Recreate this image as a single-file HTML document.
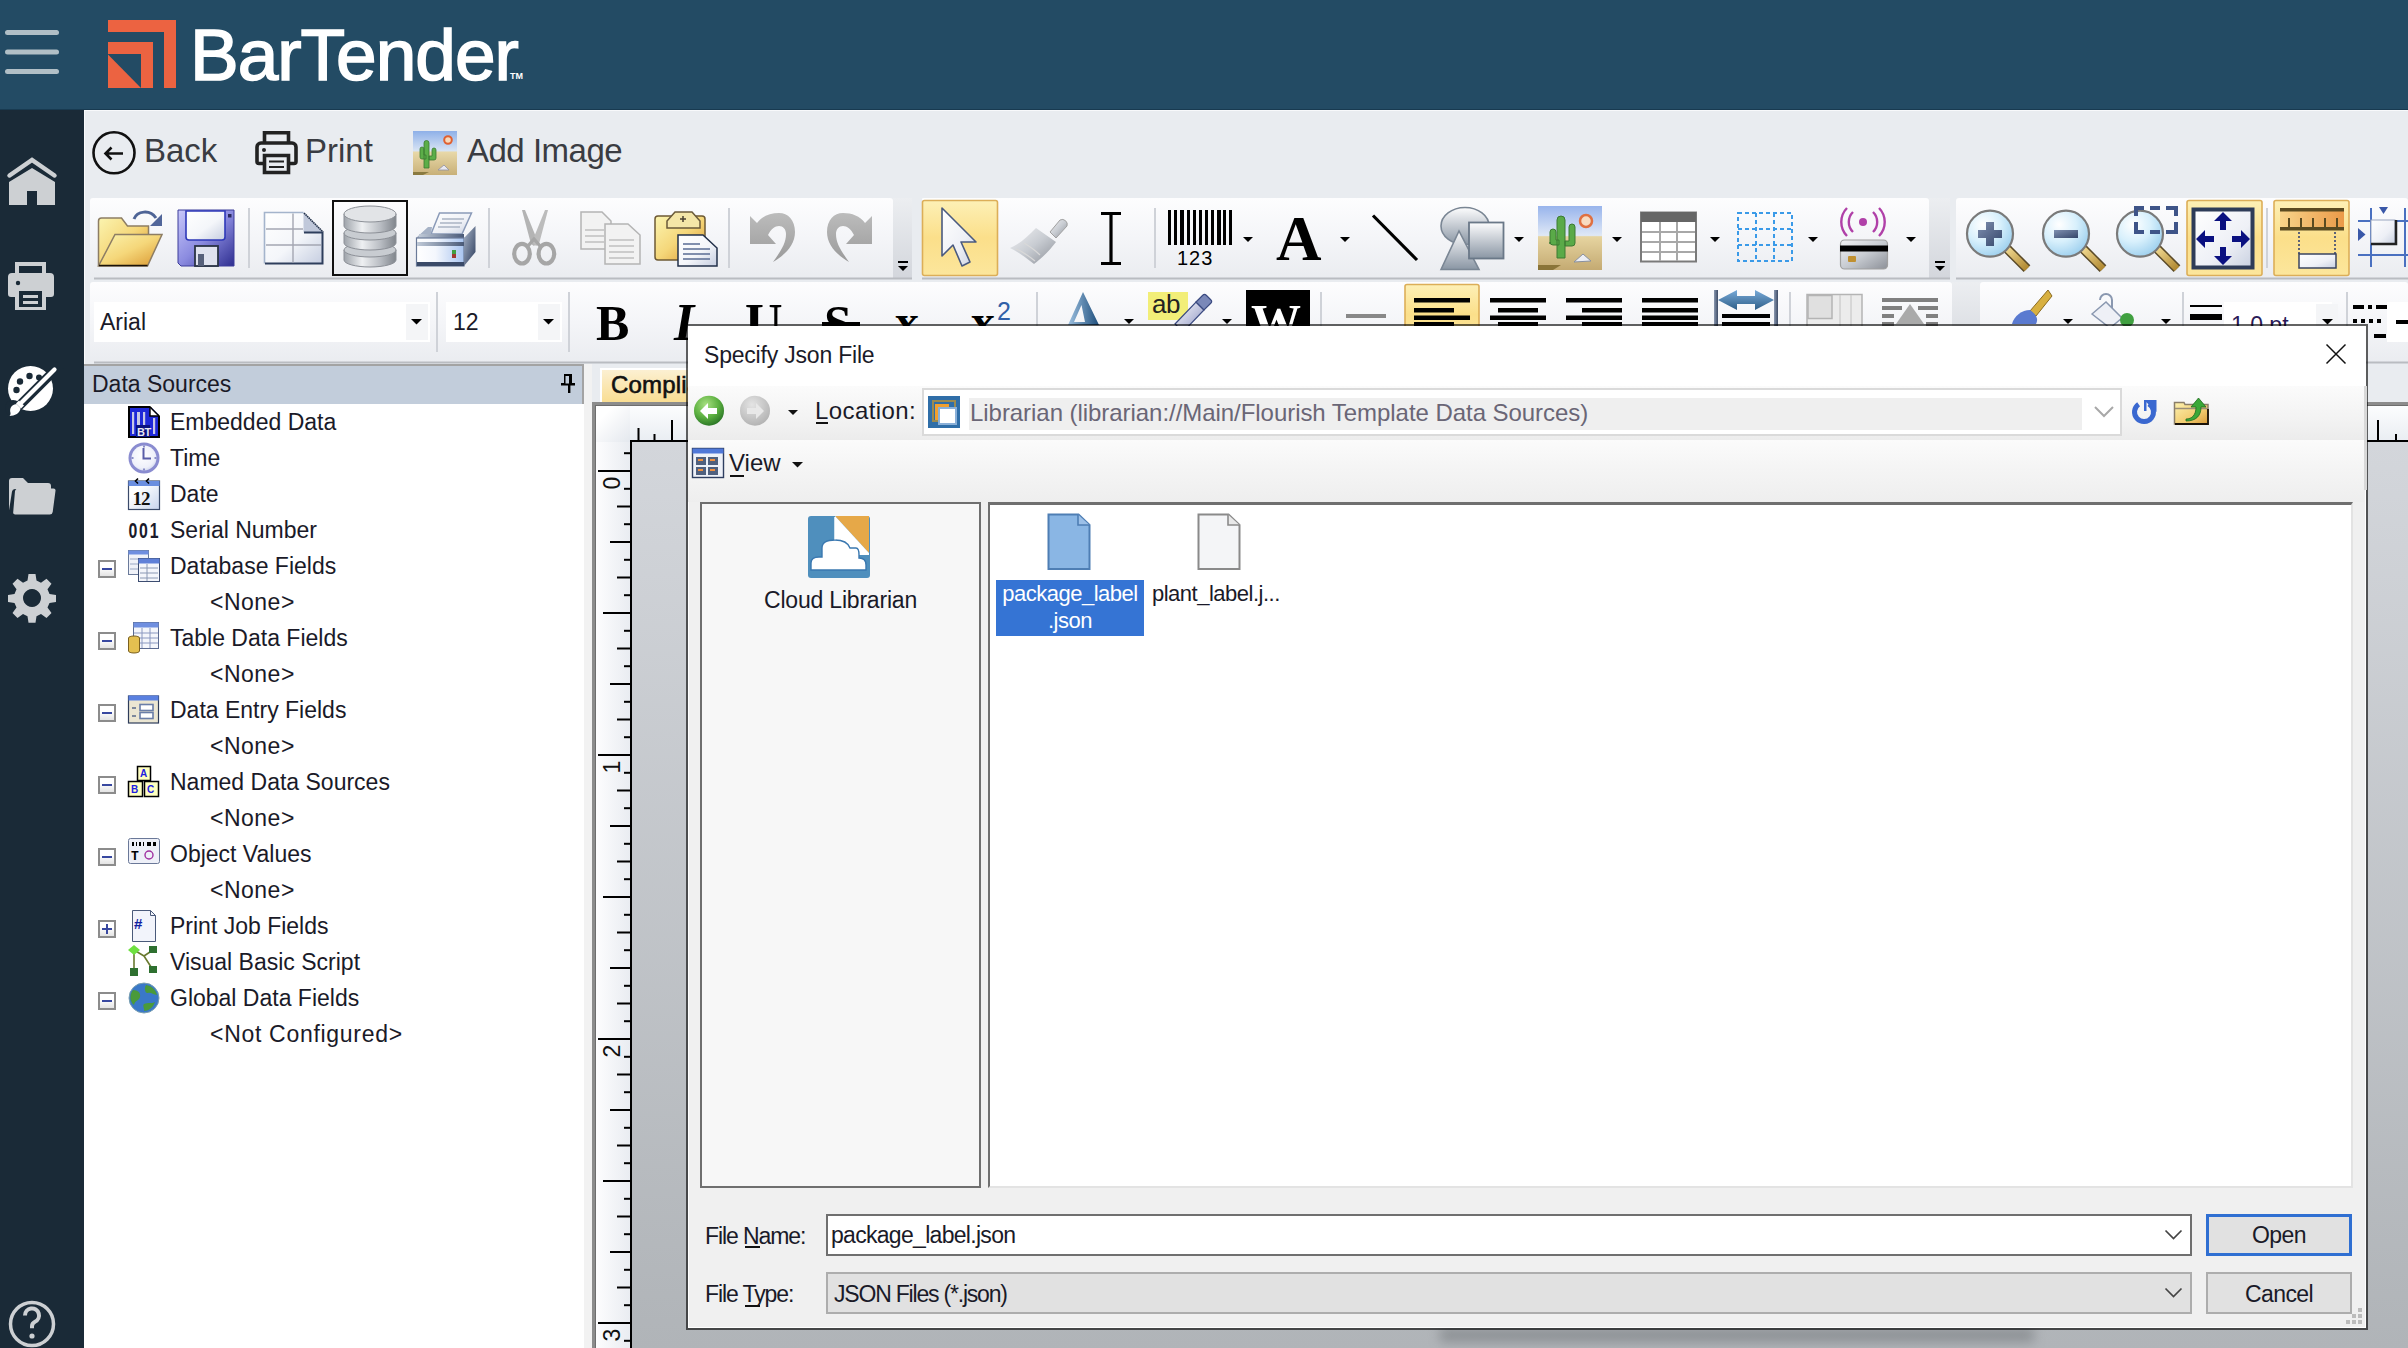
<!DOCTYPE html>
<html><head><meta charset="utf-8">
<style>
*{margin:0;padding:0;box-sizing:border-box}
html,body{width:2408px;height:1348px;overflow:hidden;background:#e9ecf0;font-family:"Liberation Sans",sans-serif}
.a{position:absolute}
svg{position:absolute;overflow:visible}
#hdr{left:0;top:0;width:2408px;height:110px;background:#234b64;border-bottom:1px solid #183a50}
#side{left:0;top:110px;width:84px;height:1238px;background:#1a2a37}
#main{left:84px;top:110px;width:2324px;height:1238px;background:#e9ecf0;border-top:1px solid #f8f9fb;border-left:1px solid #f8f9fb}
.tb{background:linear-gradient(#fdfdfe,#f3f4f7 50%,#eceef2);border-radius:3px}
.sep{width:2px;background:#d3d6db;border-right:1px solid #fff}
.t{white-space:nowrap;color:#1e1e1e}
</style></head><body>
<div id="hdr" class="a"></div>
<!-- header content -->
<svg style="left:0;top:0" width="600" height="110">
 <g stroke="#b1bfc6" stroke-width="5" stroke-linecap="round"><line x1="7.5" y1="32.5" x2="56.5" y2="32.5"/><line x1="7.5" y1="52" x2="56.5" y2="52"/><line x1="7.5" y1="71.5" x2="56.5" y2="71.5"/></g>
 <g fill="#ec6341"><path d="M108 20H176V88H164V32H108Z"/><path d="M108 42H153V88H141V54H108Z"/><path d="M108 54.5L141 88H108Z"/></g>
</svg>
<div class="a t" id="logo" style="left:190px;top:13px;font-size:73px;color:#fff;letter-spacing:-1.0px;line-height:84px;-webkit-text-stroke:1.6px #fff">BarTender</div>
<div class="a t" style="left:510px;top:71px;font-size:9px;color:#fff;font-weight:bold;line-height:10px">TM</div>
<div id="side" class="a"></div>
<div id="main" class="a"></div>
<!-- TOOLBAR -->
<svg style="left:0;top:0" width="2408" height="370">
<defs>
 <linearGradient id="gexp" x1="0" y1="0" x2="0" y2="1"><stop offset="0.4" stop-color="#fff"/><stop offset="1" stop-color="#e0e0e0"/></linearGradient>
 <linearGradient id="gp" x1="0" y1="0" x2="0" y2="1"><stop offset="0" stop-color="#fdfdfe"/><stop offset="0.5" stop-color="#f4f5f8"/><stop offset="1" stop-color="#eaecf0"/></linearGradient>
 <linearGradient id="gov" x1="0" y1="0" x2="0" y2="1"><stop offset="0" stop-color="#eceef1"/><stop offset="1" stop-color="#d3d6dc"/></linearGradient>
 <linearGradient id="gsel" x1="0" y1="0" x2="0" y2="1"><stop offset="0" stop-color="#fdf1b8"/><stop offset="0.45" stop-color="#fbe08e"/><stop offset="1" stop-color="#fbe596"/></linearGradient>
 <linearGradient id="gfold" x1="0" y1="0" x2="1" y2="1"><stop offset="0" stop-color="#fbf4b0"/><stop offset="0.5" stop-color="#f5d77a"/><stop offset="1" stop-color="#d9962e"/></linearGradient>
 <linearGradient id="gsave" x1="0" y1="0" x2="1" y2="1"><stop offset="0" stop-color="#c8c8fa"/><stop offset="0.5" stop-color="#8b8be0"/><stop offset="1" stop-color="#2e2e90"/></linearGradient>
 <linearGradient id="gwh" x1="0" y1="0" x2="1" y2="1"><stop offset="0" stop-color="#fff"/><stop offset="0.55" stop-color="#f4f6fa"/><stop offset="1" stop-color="#c5cde0"/></linearGradient>
 <linearGradient id="gsil" x1="0" y1="0" x2="1" y2="0"><stop offset="0" stop-color="#9ea3aa"/><stop offset="0.35" stop-color="#eef0f2"/><stop offset="0.7" stop-color="#b9bdc3"/><stop offset="1" stop-color="#80858c"/></linearGradient>
 <linearGradient id="ggray" x1="0" y1="0" x2="1" y2="1"><stop offset="0" stop-color="#e8e8e8"/><stop offset="1" stop-color="#9a9a9a"/></linearGradient>
 <linearGradient id="gblue" x1="0" y1="0" x2="1" y2="1"><stop offset="0" stop-color="#e0f2ff"/><stop offset="1" stop-color="#9cc8ea"/></linearGradient>
 <linearGradient id="gorg" x1="0" y1="0" x2="1" y2="0"><stop offset="0" stop-color="#f5c878"/><stop offset="1" stop-color="#ec9a40"/></linearGradient>
</defs>
<!-- row1 panels -->
<rect x="90" y="198" width="803" height="81" rx="3" fill="url(#gp)"/>
<rect x="893" y="198" width="20" height="81" fill="url(#gov)"/>
<rect x="921" y="198" width="1008" height="81" rx="3" fill="url(#gp)"/>
<rect x="1929" y="198" width="21" height="81" fill="url(#gov)"/>
<rect x="1956" y="198" width="452" height="81" rx="3" fill="url(#gp)"/>
<rect x="94" y="277.5" width="2314" height="2" fill="#b9bcc1"/>
<rect x="912" y="198" width="10" height="82" fill="#e9ecf0"/>
<rect x="1950" y="198" width="6" height="82" fill="#e9ecf0"/>
<g fill="#000"><rect x="898" y="261" width="10" height="2"/><path d="M898 266h10l-5 5z"/><rect x="1935" y="261" width="10" height="2"/><path d="M1935 266h10l-5 5z"/></g>
<!-- row2 panels -->
<rect x="90" y="282" width="1862" height="81" rx="3" fill="url(#gp)"/>
<rect x="1952" y="282" width="28" height="81" fill="url(#gov)"/>
<rect x="1980" y="282" width="428" height="81" rx="3" fill="url(#gp)"/>
<rect x="94" y="361.5" width="2314" height="2" fill="#b9bcc1"/>
<!-- separators -->
<g fill="#cfd2d8">
 <rect x="248" y="208" width="2" height="60"/><rect x="488" y="208" width="2" height="60"/><rect x="728" y="208" width="2" height="60"/>
 <rect x="1154" y="208" width="2" height="60"/><rect x="2266" y="208" width="2" height="60"/>
 <rect x="436" y="292" width="2" height="60"/><rect x="568" y="292" width="2" height="60"/><rect x="1036" y="292" width="2" height="60"/>
 <rect x="1320" y="292" width="2" height="60"/><rect x="1789" y="292" width="2" height="60"/><rect x="2182" y="292" width="2" height="60"/><rect x="2346" y="292" width="2" height="60"/>
</g>
<!-- folder open -->
<path d="M98.5 266V221a3 3 0 0 1 3-3h20l6 8h21v8" fill="url(#gfold)" stroke="#8d7d64" stroke-width="1.5"/>
<path d="M115 234.5H162L147.5 266H98.5Z" fill="url(#gfold)" stroke="#8d7d64" stroke-width="1.5"/>
<path d="M99 265.5H147.5" stroke="#1a1208" stroke-width="1.5"/>
<path d="M134 219c3-8 16-10 22-1" fill="none" stroke="#4e6496" stroke-width="3"/>
<path d="M150 226h12v-12z" fill="#52669a"/>
<!-- save -->
<path d="M178 210H234V266H181L178 263Z" fill="url(#gsave)" stroke="#3c3c9a" stroke-width="1"/>
<path d="M186 211H225V237a3 3 0 0 1-3 3H189a3 3 0 0 1-3-3Z" fill="url(#gwh)" stroke="#2e38b8" stroke-width="1.6"/>
<rect x="228" y="214" width="3.5" height="3.5" fill="#2a2a60"/>
<rect x="195" y="246" width="23" height="20" fill="#dfe2ee" stroke="#2a3344" stroke-width="1.8"/>
<rect x="198" y="254" width="6" height="12" fill="#56607a"/>
<!-- new label -->
<path d="M264.5 212.5H303.5L323 232V263.5H264.5Z" fill="url(#gwh)"/>
<path d="M264.5 263.5V212.5H303.5" fill="none" stroke="#a4b4cc" stroke-width="1.6"/>
<path d="M303.5 212.5V232.5H323Z" fill="#c0c8da"/>
<path d="M304 213L323 232" stroke="#22304a" stroke-width="1.6" stroke-dasharray="1.6 0.6"/>
<path d="M304 232.5H322.5V263.5H265" fill="none" stroke="#2e3e5c" stroke-width="2"/>
<path d="M266 229H303M266 245H321M293 213.5V262.5" stroke="#a4a6b2" stroke-width="1.4"/>
<!-- database selected -->
<rect x="333" y="201" width="74" height="74" fill="none" stroke="#111" stroke-width="2"/>
<g stroke="#8c9097" stroke-width="1">
 <path d="M344 250v10a26 7 0 0 0 52 0v-10z" fill="url(#gsil)"/><ellipse cx="370" cy="250" rx="26" ry="7" fill="#c8ccd1"/>
 <path d="M344 233v10a26 7 0 0 0 52 0v-10z" fill="url(#gsil)"/><ellipse cx="370" cy="233" rx="26" ry="7" fill="#c8ccd1"/>
 <path d="M344 214v12a26 7 0 0 0 52 0v-12z" fill="url(#gsil)"/><ellipse cx="370" cy="214" rx="26" ry="8" fill="#e2e4e7"/>
</g>
<!-- printer -->
<defs><linearGradient id="gprf" x1="0" y1="0" x2="1" y2="0"><stop offset="0" stop-color="#fff"/><stop offset="0.4" stop-color="#f4f7fd"/><stop offset="1" stop-color="#a8c4f0"/></linearGradient>
<linearGradient id="gprs" x1="0" y1="0" x2="1" y2="1"><stop offset="0" stop-color="#a8b4c8"/><stop offset="1" stop-color="#2c3c5c"/></linearGradient>
<linearGradient id="gprb" x1="0" y1="0" x2="1" y2="0"><stop offset="0" stop-color="#c0cad8"/><stop offset="1" stop-color="#4a5a78"/></linearGradient></defs>
<path d="M439.5 213H471.5L462 234H431Z" fill="url(#g2w)" stroke="#8a9ab8" stroke-width="1.5"/>
<path d="M442 219H464M440 223H462M438 227H460" stroke="#aab4c4" stroke-width="1.3"/>
<path d="M416 238L428 227H432L431 234H464V238Z" fill="#a6b2c6"/>
<path d="M419 234H464V238H419Z" fill="url(#gprb)"/>
<rect x="416.5" y="238" width="47.5" height="28" fill="url(#gprf)" stroke="#6a7a98" stroke-width="1.2"/>
<rect x="417" y="242" width="47" height="4" fill="url(#gprb)"/>
<rect x="417" y="262" width="47" height="4" fill="#3a4a68"/>
<path d="M464 238L475.5 226V252L464 266Z" fill="url(#gprs)"/>
<rect x="452" y="250" width="4" height="4" fill="#40a040"/><rect x="452" y="254" width="4" height="4" fill="#a03a30"/>
<!-- scissors gray -->
<g fill="none" stroke="#a6a6a6"><ellipse cx="522" cy="253.7" rx="7.8" ry="9.8" stroke-width="4.2"/><ellipse cx="546.4" cy="253.7" rx="7.8" ry="9.8" stroke-width="4.2"/></g>
<path d="M522 210l3 0 13 32-4 4-3-2z" fill="#b4b4b4"/><path d="M548 210l-3 0-13 32 4 4 3-2z" fill="#bcbcbc"/>
<path d="M528 246l6-7 6 7" stroke="#a6a6a6" stroke-width="3.4" fill="none"/>
<!-- copy gray -->
<g stroke="#b4b4b4" stroke-width="1.5" fill="#f2f2f2"><path d="M581 212H602L611 221V249H581Z"/><path d="M605 224H628L640 235V264H605Z"/></g>
<g stroke="#c0c0c0" stroke-width="1.5"><path d="M585 230H604M585 236H604M585 242H604M609 240H634M609 246H634M609 252H634M609 258H634"/></g>
<!-- paste -->
<path d="M655 219a3 3 0 0 1 3-3H702a3 3 0 0 1 3 3V260H658a3 3 0 0 1-3-3Z" fill="url(#gfold)" stroke="#6e5a34" stroke-width="1.5"/>
<path d="M667 228V221L675 212H692L700 221V228Z" fill="#f4e6a8" stroke="#6a5a3a" stroke-width="1.5"/>
<path d="M680 219h6M683 216v6" stroke="#4a4030" stroke-width="1.5"/>
<path d="M678 235H703L717 248V266H678Z" fill="url(#gwh)" stroke="#22304a" stroke-width="1.5"/>
<path d="M683 244H700M683 249H710M683 254H710M683 259H710" stroke="#5a6c94" stroke-width="1.5"/>
<!-- undo / redo gray -->
<defs><linearGradient id="gundo" x1="0" y1="0" x2="0" y2="1"><stop offset="0" stop-color="#bcbcbc"/><stop offset="1" stop-color="#9a9a9a"/></linearGradient></defs>
<path d="M750 216 L757 223 C762 216 770 213 779 213 C788 213 795 220 795 232 C795 245 785 255 773 262 C780 252 786 244 786 234 C786 229 783 226 779 226 C775 226 771 229 768 235 L776 244 H750 Z" fill="url(#gundo)"/>
<path d="M 872 216 L 865 223 C 860 216 852 213 843 213 C 834 213 827 220 827 232 C 827 245 837 255 849 262 C 842 252 836 244 836 234 C 836 229 839 226 843 226 C 847 226 851 229 854 235 L 846 244 H 872 Z" fill="url(#gundo)"/>
</svg>
<!-- LEFT PANEL -->
<div class="a" style="left:84px;top:364px;width:500px;height:40px;background:#c2cddb;border-top:2px solid #a3a3a3;border-right:2px solid #a3a3a3"></div>
<div class="a t" style="left:92px;top:370px;font-size:23px;line-height:28px;color:#1a1a28">Data Sources</div>
<svg style="left:560px;top:374px" width="16" height="20"><path d="M1 9h14v2.5H1z M4 0h8v10H4z M8 11h2.4v8H8z" fill="#000"/><rect x="5.5" y="2" width="3.5" height="7.5" fill="#c2cddb"/></svg>
<div class="a" style="left:84px;top:404px;width:500px;height:944px;background:#fff"></div>
<div class="a" style="left:584px;top:364px;width:8px;height:984px;background:#f2f2f2"></div>
<div class="a t" style="left:170px;top:409px;font-size:23px;line-height:26px;color:#1a1a28">Embedded Data</div>
<div class="a t" style="left:170px;top:445px;font-size:23px;line-height:26px;color:#1a1a28">Time</div>
<div class="a t" style="left:170px;top:481px;font-size:23px;line-height:26px;color:#1a1a28">Date</div>
<div class="a t" style="left:170px;top:517px;font-size:23px;line-height:26px;color:#1a1a28">Serial Number</div>
<div class="a t" style="left:170px;top:553px;font-size:23px;line-height:26px;color:#1a1a28">Database Fields</div>
<svg style="left:98px;top:560px" width="19" height="19"><rect x="1" y="1" width="16" height="16" fill="url(#gexp)" stroke="#8c8c8c" stroke-width="2"/><rect x="4" y="8" width="10" height="2" fill="#3848a0"/></svg>
<div class="a t" style="left:210px;top:589px;font-size:23px;line-height:26px;color:#1a1a28;letter-spacing:0.5px">&lt;None&gt;</div>
<div class="a t" style="left:170px;top:625px;font-size:23px;line-height:26px;color:#1a1a28">Table Data Fields</div>
<svg style="left:98px;top:632px" width="19" height="19"><rect x="1" y="1" width="16" height="16" fill="url(#gexp)" stroke="#8c8c8c" stroke-width="2"/><rect x="4" y="8" width="10" height="2" fill="#3848a0"/></svg>
<div class="a t" style="left:210px;top:661px;font-size:23px;line-height:26px;color:#1a1a28;letter-spacing:0.5px">&lt;None&gt;</div>
<div class="a t" style="left:170px;top:697px;font-size:23px;line-height:26px;color:#1a1a28">Data Entry Fields</div>
<svg style="left:98px;top:704px" width="19" height="19"><rect x="1" y="1" width="16" height="16" fill="url(#gexp)" stroke="#8c8c8c" stroke-width="2"/><rect x="4" y="8" width="10" height="2" fill="#3848a0"/></svg>
<div class="a t" style="left:210px;top:733px;font-size:23px;line-height:26px;color:#1a1a28;letter-spacing:0.5px">&lt;None&gt;</div>
<div class="a t" style="left:170px;top:769px;font-size:23px;line-height:26px;color:#1a1a28">Named Data Sources</div>
<svg style="left:98px;top:776px" width="19" height="19"><rect x="1" y="1" width="16" height="16" fill="url(#gexp)" stroke="#8c8c8c" stroke-width="2"/><rect x="4" y="8" width="10" height="2" fill="#3848a0"/></svg>
<div class="a t" style="left:210px;top:805px;font-size:23px;line-height:26px;color:#1a1a28;letter-spacing:0.5px">&lt;None&gt;</div>
<div class="a t" style="left:170px;top:841px;font-size:23px;line-height:26px;color:#1a1a28">Object Values</div>
<svg style="left:98px;top:848px" width="19" height="19"><rect x="1" y="1" width="16" height="16" fill="url(#gexp)" stroke="#8c8c8c" stroke-width="2"/><rect x="4" y="8" width="10" height="2" fill="#3848a0"/></svg>
<div class="a t" style="left:210px;top:877px;font-size:23px;line-height:26px;color:#1a1a28;letter-spacing:0.5px">&lt;None&gt;</div>
<div class="a t" style="left:170px;top:913px;font-size:23px;line-height:26px;color:#1a1a28">Print Job Fields</div>
<svg style="left:98px;top:920px" width="19" height="19"><rect x="1" y="1" width="16" height="16" fill="url(#gexp)" stroke="#8c8c8c" stroke-width="2"/><rect x="4" y="8" width="10" height="2" fill="#3848a0"/><rect x="8" y="4" width="2" height="10" fill="#3848a0"/></svg>
<div class="a t" style="left:170px;top:949px;font-size:23px;line-height:26px;color:#1a1a28">Visual Basic Script</div>
<div class="a t" style="left:170px;top:985px;font-size:23px;line-height:26px;color:#1a1a28">Global Data Fields</div>
<svg style="left:98px;top:992px" width="19" height="19"><rect x="1" y="1" width="16" height="16" fill="url(#gexp)" stroke="#8c8c8c" stroke-width="2"/><rect x="4" y="8" width="10" height="2" fill="#3848a0"/></svg>
<div class="a t" style="left:210px;top:1021px;font-size:23px;line-height:26px;color:#1a1a28;letter-spacing:0.7px">&lt;Not Configured&gt;</div>
<svg style="left:128px;top:406px" width="32" height="32"><rect x="1" y="1" width="30" height="30" fill="#1e28d8" stroke="#000" stroke-width="2"/><path d="M22 0H32V10Z" fill="#fff"/><path d="M22 1V10H31" fill="#fff" stroke="#000" stroke-width="1.4"/><path d="M22 1L31 10" stroke="#000" stroke-width="1.4"/><g fill="#c8c8e6"><rect x="4" y="6" width="2.2" height="22"/><rect x="9" y="6" width="3" height="14"/><rect x="15" y="6" width="2.2" height="14"/><rect x="25" y="12" width="2.2" height="16"/></g><rect x="8" y="19" width="14" height="12" fill="#0a1080"/><text x="9" y="30" font-family="Liberation Sans" font-weight="bold" font-size="11" fill="#e8e8f4" letter-spacing="-0.5">BT</text></svg>
<svg style="left:128px;top:442px" width="32" height="32"><defs><radialGradient id="gclk" cx="0.45" cy="0.4" r="0.7"><stop offset="0" stop-color="#ffffff"/><stop offset="0.7" stop-color="#eef0fa"/><stop offset="1" stop-color="#c4cce8"/></radialGradient></defs><circle cx="16" cy="16" r="15.5" fill="#8a8cd0"/><circle cx="16" cy="16" r="12.5" fill="url(#gclk)"/><path d="M15.5 6V16.5H23" fill="none" stroke="#5a5ea8" stroke-width="2"/><g fill="#8a8ec8"><rect x="15" y="3.5" width="2" height="2"/><rect x="15" y="26.5" width="2" height="2"/><rect x="3.5" y="15" width="2" height="2"/><rect x="26.5" y="15" width="2" height="2"/></g></svg>
<svg style="left:128px;top:478px" width="32" height="32"><defs><linearGradient id="gdat" x1="0" y1="0" x2="1" y2="1"><stop offset="0.3" stop-color="#fff"/><stop offset="1" stop-color="#c8d4ee"/></linearGradient></defs><rect x="0.5" y="3" width="31" height="28.5" fill="url(#gdat)" stroke="#3a4a6a" stroke-width="1.2"/><rect x="0.5" y="3" width="31" height="5" fill="#6a8ee0"/><path d="M10 0.5l-2.5 2.5 2.5 2.5M21 0.5l-2.5 2.5 2.5 2.5" stroke="#000" fill="none" stroke-width="1.6"/><text x="4.5" y="27" font-family="Liberation Serif" font-weight="bold" font-size="19" fill="#111" letter-spacing="-1">12</text></svg>
<svg style="left:128px;top:514px" width="32" height="32"><text transform="translate(0.5,24) scale(0.72,1)" x="0" y="0" font-family="Liberation Sans" font-weight="bold" font-size="22" fill="#1a1a2a" letter-spacing="2.5">001</text></svg>
<svg style="left:128px;top:550px" width="32" height="32"><rect x="0.5" y="0.5" width="20" height="24" fill="#f0f2f8" stroke="#6a7a9a"/><rect x="0.5" y="0.5" width="20" height="4" fill="#6f8fe0"/><path d="M2 9h17M2 14h17M2 19h17" stroke="#9aa8c4"/><rect x="10.5" y="8.5" width="21" height="23" fill="#f4f6fb" stroke="#3c4c70"/><rect x="10.5" y="8.5" width="21" height="5" fill="#5f80d8"/><path d="M12 18h18M12 23h18M12 28h18M19 14v17" stroke="#8a98b4"/></svg>
<svg style="left:128px;top:622px" width="32" height="32"><rect x="5.5" y="0.5" width="25" height="26" fill="#f4f6fb" stroke="#5a6a90"/><rect x="5.5" y="0.5" width="25" height="5" fill="#6f8fe0"/><path d="M6 11h24M6 16h24M6 21h24M14 6v20M22 6v20" stroke="#8a98c0"/><path d="M0.5 16a5.5 2 0 0 1 11 0v13a5.5 2 0 0 1-11 0z" fill="#e4c050" stroke="#7a6020"/></svg>
<svg style="left:128px;top:694px" width="32" height="32"><rect x="0.5" y="2" width="30" height="27" fill="#ebe6d2" stroke="#2e3c5a" stroke-width="1.2"/><rect x="0.5" y="1.5" width="30" height="5" fill="#5a80e0"/><path d="M4 14h4M4 22h4" stroke="#5a6a8a" stroke-width="1.6"/><rect x="12" y="10.5" width="13" height="6" fill="#fff" stroke="#6a7ea8" stroke-width="1.6"/><rect x="12" y="18.5" width="13" height="6" fill="#fff" stroke="#6a7ea8" stroke-width="1.6"/></svg>
<svg style="left:128px;top:766px" width="32" height="32"><rect x="9.5" y="0.5" width="13" height="14" fill="#ffffc0" stroke="#000" stroke-width="1.5"/><rect x="0.5" y="15.5" width="14" height="15" fill="#ffffc0" stroke="#000" stroke-width="1.5"/><rect x="16.5" y="15.5" width="14" height="15" fill="#ffffc0" stroke="#000" stroke-width="1.5"/><g font-family="Liberation Sans" font-weight="bold" font-size="10" fill="#2020e0"><text x="12" y="11">A</text><text x="3" y="27">B</text><text x="19" y="27">C</text></g></svg>
<svg style="left:128px;top:838px" width="32" height="32"><rect x="0.5" y="0.5" width="31" height="25" rx="2" fill="#eef0f8" stroke="#6a7898"/><g fill="#000"><rect x="4" y="4" width="2" height="4"/><rect x="8" y="4" width="1" height="4"/><rect x="11" y="4" width="2" height="4"/><rect x="15" y="4" width="1" height="4"/><rect x="19" y="4" width="4" height="4"/><rect x="25" y="4" width="3" height="4"/></g><text x="3" y="22" font-family="Liberation Mono" font-weight="bold" font-size="13" fill="#000">T</text><circle cx="21" cy="17" r="4" fill="none" stroke="#a030a0" stroke-width="1.4"/></svg>
<svg style="left:128px;top:910px" width="32" height="32"><path d="M4.5 0.5h18l5 5v26h-23z" fill="#f2f4fb" stroke="#4a5a7a"/><path d="M22.5 0.5v5h5" fill="none" stroke="#4a5a7a"/><text x="6" y="19" font-family="Liberation Sans" font-weight="bold" font-size="15" fill="#1020a0">#</text></svg>
<svg style="left:128px;top:946px" width="32" height="32"><path d="M6 4L16 10L25 4M6 4L6 26M16 10L25 24" fill="none" stroke="#6a7a30" stroke-width="1.6"/><rect x="21" y="0" width="8" height="7" fill="#2e7030"/><rect x="21" y="20" width="8" height="7" fill="#2e7030"/><rect x="2" y="22" width="8" height="8" fill="#2e7030"/><path d="M0 4l6-5 6 5-6 5z" fill="#6ee040"/></svg>
<svg style="left:128px;top:982px" width="32" height="32"><circle cx="16" cy="16" r="15" fill="#3a78c8"/><path d="M5 8c5 0 8 3 7 7-1 4-5 3-6 8-4-3-5-10-1-15zM18 3c6 1 10 5 11 10-4 0-6-3-9-2-3 1-4-5-2-8zM16 22c4-2 8 0 11-2-2 6-7 9-11 9 1-2-2-5 0-7z" fill="#4a9a3a"/><circle cx="16" cy="16" r="15" fill="none" stroke="#7aa0b0" stroke-width="1"/></svg>
<!-- TOOLBAR 2 -->
<svg style="left:0;top:0" width="2408" height="370">
<defs>
 <linearGradient id="g2sel" x1="0" y1="0" x2="0" y2="1"><stop offset="0" stop-color="#fdf0b6"/><stop offset="0.5" stop-color="#fbdf8a"/><stop offset="1" stop-color="#fce69c"/></linearGradient>
 <linearGradient id="g2gray" x1="0" y1="0" x2="1" y2="1"><stop offset="0" stop-color="#f2f2f4"/><stop offset="0.5" stop-color="#c8ccd2"/><stop offset="1" stop-color="#8c9098"/></linearGradient>
 <linearGradient id="g2sky" x1="0" y1="0" x2="0" y2="1"><stop offset="0" stop-color="#98b4ec"/><stop offset="0.46" stop-color="#dfe8f6"/><stop offset="0.48" stop-color="#e6d4a0"/><stop offset="1" stop-color="#c4aa72"/></linearGradient>
 <radialGradient id="g2lens" cx="0.35" cy="0.3" r="0.75"><stop offset="0" stop-color="#ffffff"/><stop offset="0.5" stop-color="#d8f0fc"/><stop offset="1" stop-color="#9ccfee"/></radialGradient>
 <linearGradient id="g2h" x1="0" y1="0" x2="1" y2="1"><stop offset="0" stop-color="#f0d890"/><stop offset="1" stop-color="#b08830"/></linearGradient>
 <linearGradient id="g2w" x1="0" y1="0" x2="1" y2="1"><stop offset="0" stop-color="#fff"/><stop offset="0.6" stop-color="#eef0f6"/><stop offset="1" stop-color="#c8d0e0"/></linearGradient>
 <linearGradient id="g2org" x1="0" y1="0" x2="1" y2="0"><stop offset="0" stop-color="#f8d48a"/><stop offset="1" stop-color="#eb9a48"/></linearGradient>
 <linearGradient id="g2A" x1="0" y1="0" x2="0" y2="1"><stop offset="0" stop-color="#8ab0d8"/><stop offset="1" stop-color="#2a5a98"/></linearGradient>
</defs>
<!-- selected boxes -->
<rect x="922.5" y="200.5" width="75" height="75" rx="2" fill="url(#g2sel)" stroke="#dcae58" stroke-width="1.6"/>
<rect x="2187" y="200.5" width="75" height="75" rx="2" fill="url(#g2sel)" stroke="#dcae58" stroke-width="1.6"/>
<rect x="2274" y="200.5" width="75" height="75" rx="2" fill="url(#g2sel)" stroke="#dcae58" stroke-width="1.6"/>
<!-- arrow cursor -->
<path d="M942 208V256L953 245L962 266L970 262L961 242H976Z" fill="url(#g2w)" stroke="#4a5a80" stroke-width="1.6" stroke-linejoin="round"/>
<!-- brush gray -->
<path d="M1050 232l10-12a5 5 0 0 1 7 6l-11 12z" fill="url(#g2gray)" stroke="#a0a0a0" stroke-width="1"/>
<path d="M1036 228l20 14c-6 8-14 16-22 22c-6-5-16-12-24-16c10-4 18-12 26-20z" fill="url(#g2gray)"/>
<path d="M1016 249c6 2 14 8 19 12M1024 243c5 3 12 8 16 12" stroke="#d8d8d8" stroke-width="1.2" fill="none"/>
<!-- I-beam -->
<path d="M1101 213.5H1121M1101 263.5H1121M1111 213.5V263.5" stroke="#000" stroke-width="3.2"/>
<!-- barcode -->
<g fill="#000"><rect x="1168" y="210" width="3" height="35"/><rect x="1174" y="210" width="3" height="35"/><rect x="1180" y="210" width="4" height="35"/><rect x="1187" y="210" width="3" height="35"/><rect x="1193" y="210" width="3" height="35"/><rect x="1199" y="210" width="3" height="35"/><rect x="1205" y="210" width="3" height="35"/><rect x="1211" y="210" width="3" height="35"/><rect x="1217" y="210" width="4" height="35"/><rect x="1223" y="210" width="3" height="35"/><rect x="1229" y="210" width="3" height="35"/></g>
<text x="1177" y="265" font-family="Liberation Sans" font-size="20" fill="#000" letter-spacing="1">123</text>
<!-- A text -->
<text x="1276" y="260" font-family="Liberation Serif" font-weight="bold" font-size="63" fill="#000">A</text>
<!-- line -->
<path d="M1373 215.5L1417 260" stroke="#000" stroke-width="3.2"/>
<!-- shapes -->
<defs><linearGradient id="gshp" x1="0" y1="0" x2="0" y2="1"><stop offset="0" stop-color="#fdfdfe"/><stop offset="1" stop-color="#8a96a4"/></linearGradient></defs>
<ellipse cx="1465" cy="226" rx="24" ry="18.5" fill="url(#gshp)" stroke="#7a8694" stroke-width="1.6"/>
<path d="M1441 269.5L1459 231L1479 269.5Z" fill="url(#gshp)" stroke="#7a8694" stroke-width="1.6"/>
<rect x="1469" y="222.5" width="34.5" height="36" fill="url(#gshp)" stroke="#6a7888" stroke-width="1.8"/>
<!-- picture -->
<rect x="1538" y="206" width="64" height="64" fill="url(#g2sky)"/>
<path d="M1538 270h15l8-5h-23z" fill="#8a7438"/>
<path d="M1557 258V220a4 4 0 0 1 8 0V258zM1550 244V232a3 3 0 0 1 6 0V240h3v5h-6a3 3 0 0 1-3-3zM1565 241h4V227a3 3 0 0 1 6 0V243a3 3 0 0 1-3 3h-7z" fill="#5aaa48" stroke="#3c7a32" stroke-width="1"/>
<circle cx="1586" cy="221" r="6" fill="#f8dcc0" stroke="#e07040" stroke-width="2.5"/>
<path d="M1574 262l9-8l8 7z" fill="#eceef4" stroke="#8890a0" stroke-width="1"/>
<!-- table -->
<rect x="1641" y="212.5" width="55" height="49" fill="#fff" stroke="#7a7a7a" stroke-width="2"/>
<rect x="1641" y="212" width="55" height="10" fill="#666"/>
<path d="M1660 222V261M1677 222V261M1642 232H1695M1642 242H1695M1642 252H1695" stroke="#a8a8a8" stroke-width="2"/>
<!-- dotted grid -->
<g fill="none" stroke="#3a9ae8" stroke-width="2" stroke-dasharray="4 3"><rect x="1738" y="213" width="54" height="48"/><path d="M1756 213V261M1774 213V261M1738 229H1792M1738 245H1792"/></g>
<!-- RFID -->
<g fill="none" stroke="#b040a8" stroke-width="2.4"><path d="M1853 212a14 14 0 0 0 0 20M1847 208a20 20 0 0 0 0 28M1873 212a14 14 0 0 1 0 20M1879 208a20 20 0 0 1 0 28"/></g>
<circle cx="1863" cy="222" r="4" fill="#b040a8"/>
<rect x="1840.5" y="240" width="47" height="29" rx="4" fill="url(#g2gray)" stroke="#a0a0a0" stroke-width="1.2"/>
<rect x="1840" y="245.5" width="48" height="6" fill="#000"/>
<rect x="1848" y="256" width="8" height="6" rx="1" fill="#c09030"/>
<!-- dropdown arrows -->
<g fill="#000">
 <path d="M1243 237h10l-5 5z"/><path d="M1340 237h10l-5 5z"/><path d="M1514 237h10l-5 5z"/><path d="M1612 237h10l-5 5z"/><path d="M1710 237h10l-5 5z"/><path d="M1808 237h10l-5 5z"/><path d="M1906 237h10l-5 5z"/>
</g>
<!-- zoom in/out/fit -->
<defs><linearGradient id="g2pl" x1="0" y1="0" x2="1" y2="1"><stop offset="0" stop-color="#8090b0"/><stop offset="1" stop-color="#34466a"/></linearGradient></defs>
<path d="M2007 248.7l20 20" stroke="#5a4a28" stroke-width="9.5"/><path d="M2007 248.7l20 20" stroke="url(#g2h)" stroke-width="6.5"/>
 <circle cx="1990" cy="233.7" r="23" fill="url(#g2lens)" stroke="#7a7a7a" stroke-width="2.2"/>
 <path d="M1978 230H2002V238H1978ZM1986 222H1994V246H1986Z" fill="url(#g2pl)"/>
<path d="M2083 248.7l20 20" stroke="#5a4a28" stroke-width="9.5"/><path d="M2083 248.7l20 20" stroke="url(#g2h)" stroke-width="6.5"/>
 <circle cx="2066" cy="233.7" r="23" fill="url(#g2lens)" stroke="#7a7a7a" stroke-width="2.2"/>
 <path d="M2054 230H2078V238H2054Z" fill="url(#g2pl)"/>
<path d="M2157 248.7l20 20" stroke="#5a4a28" stroke-width="9.5"/><path d="M2157 248.7l20 20" stroke="url(#g2h)" stroke-width="6.5"/>
 <circle cx="2140" cy="233.7" r="23" fill="url(#g2lens)" stroke="#7a7a7a" stroke-width="2.2"/>
 <g fill="#3e5488"><path d="M2134 206H2144V210H2138V216H2134Z"/><rect x="2150" y="206" width="10" height="4"/><path d="M2166 206H2178V216H2174V210H2166Z"/>
 <path d="M2134 222H2138V230H2144V234H2134Z"/><rect x="2150" y="230" width="10" height="4"/><path d="M2174 222H2178V234H2166V230H2174Z"/></g>
<!-- move/fit icon -->
<rect x="2193.5" y="209.5" width="59" height="58" fill="url(#g2w)" stroke="#2e3c58" stroke-width="4"/>
<g fill="#0a1080">
 <path d="M2223 212l-9 9h6v9h6v-9h6z"/><path d="M2223 265l-9-9h6v-9h6v9h6z"/>
 <path d="M2196 239l9-9v6h9v6h-9v6z"/><path d="M2250 239l-9-9v6h-9v6h9v6z"/>
</g>
<!-- ruler icon -->
<rect x="2280" y="208" width="64" height="22" fill="url(#g2org)"/>
<rect x="2280" y="208" width="64" height="3.5" fill="#5a4a20"/><rect x="2280" y="227" width="64" height="3.5" fill="#5a4a20"/>
<g fill="#5a4a20"><rect x="2288" y="218" width="2" height="9"/><rect x="2300" y="218" width="2" height="9"/><rect x="2312" y="218" width="2" height="9"/><rect x="2324" y="218" width="2" height="9"/><rect x="2336" y="218" width="2" height="9"/></g>
<path d="M2299 232V254M2335 232V254" stroke="#2a3a70" stroke-width="1.5" stroke-dasharray="2 2"/>
<rect x="2299" y="254" width="37" height="14" fill="url(#g2w)" stroke="#3a4460" stroke-width="1.5"/>
<!-- snap icon -->
<g stroke="#4a70c0" stroke-width="2"><path d="M2371 208V267M2405 208V267M2358 221H2408M2358 255H2408"/></g>
<rect x="2371" y="220" width="24" height="24" fill="url(#g2w)" stroke="#9aa6c0" stroke-width="1"/>
<path d="M2371 244H2396V220" fill="none" stroke="#222" stroke-width="2.5"/>
<path d="M2379 207h9l-4.5 7z" fill="#3a58a8"/><path d="M2358 228v13l7.5-6.5z" fill="#3a58a8"/>
<!-- ROW 2 -->
<rect x="94" y="302" width="336" height="40" fill="#fff"/>
<rect x="406" y="304" width="22" height="36" fill="#f4f5f7"/>
<path d="M411 319h11l-5.5 5.5z" fill="#000"/>
<text x="100" y="329.5" font-family="Liberation Sans" font-size="23" fill="#1a1a28">Arial</text>
<rect x="446" y="302" width="116" height="40" fill="#fff"/>
<rect x="538" y="304" width="22" height="36" fill="#f4f5f7"/>
<path d="M543 319h11l-5.5 5.5z" fill="#000"/>
<text x="453" y="329.5" font-family="Liberation Sans" font-size="23" fill="#1a1a28">12</text>
<text x="596" y="340" font-family="Liberation Serif" font-weight="bold" font-size="50" fill="#000">B</text>
<text x="674" y="340" font-family="Liberation Serif" font-weight="bold" font-style="italic" font-size="52" fill="#000">I</text>
<text x="745" y="340" font-family="Liberation Serif" font-weight="bold" font-size="52" fill="#000">U</text>
<text x="824" y="340" font-family="Liberation Serif" font-weight="bold" font-size="50" fill="#000">S</text>
<rect x="822" y="322" width="38" height="4" fill="#000"/>
<text x="895" y="338" font-family="Liberation Serif" font-weight="bold" font-size="48" fill="#000">x</text>
<text x="971" y="338" font-family="Liberation Serif" font-weight="bold" font-size="48" fill="#000">x</text>
<text x="997" y="320" font-family="Liberation Sans" font-size="25" fill="#3060a8">2</text>
<defs><linearGradient id="g2A2" x1="0" y1="0" x2="1" y2="0"><stop offset="0" stop-color="#9cc0e0"/><stop offset="1" stop-color="#1e4e7c"/></linearGradient></defs><path fill-rule="evenodd" d="M1083 292L1068 325H1099ZM1081.5 305L1074 322H1085Z" fill="url(#g2A2)"/>
<path d="M1124 319h10l-5 5z" fill="#000"/>
<rect x="1148" y="292" width="40" height="28" fill="#f2ee78"/>
<text x="1152" y="313" font-family="Liberation Sans" font-size="26" fill="#222" letter-spacing="-0.5">ab</text>
<defs><linearGradient id="gpen" x1="0" y1="0" x2="1" y2="1"><stop offset="0" stop-color="#fff"/><stop offset="1" stop-color="#8890c0"/></linearGradient></defs>
<path d="M1175 324L1196 302L1204 310L1183 332Z" fill="url(#gpen)" stroke="#3a4a80" stroke-width="1.2"/>
<path d="M1196 302L1203 295a2 2 0 0 1 3 0l5 5a2 2 0 0 1 0 3l-7 7Z" fill="#7a88b8" stroke="#3a4a80" stroke-width="1.2"/>
<path d="M1222 319h10l-5 5z" fill="#000"/>
<rect x="1246" y="290" width="64" height="40" fill="#000"/>
<text x="1251" y="339" font-family="Liberation Serif" font-weight="bold" font-size="50" fill="#fff" letter-spacing="-1">W</text>
<rect x="1346" y="314" width="40" height="4" fill="#888"/>
<rect x="1405" y="284.5" width="74" height="60" rx="2" fill="url(#g2sel)" stroke="#dcae58" stroke-width="1.6"/>
<g fill="#000">
 <rect x="1414" y="298" width="56" height="4.5"/><rect x="1414" y="308" width="40" height="4.5"/><rect x="1414" y="315.5" width="56" height="4.5"/><rect x="1414" y="322" width="40" height="4"/>
 <rect x="1490" y="298" width="56" height="4.5"/><rect x="1498" y="308" width="40" height="4.5"/><rect x="1490" y="315.5" width="56" height="4.5"/><rect x="1498" y="322" width="40" height="4"/>
 <rect x="1566" y="298" width="56" height="4.5"/><rect x="1582" y="308" width="40" height="4.5"/><rect x="1566" y="315.5" width="56" height="4.5"/><rect x="1582" y="322" width="40" height="4"/>
 <rect x="1642" y="298" width="56" height="4.5"/><rect x="1642" y="308" width="56" height="4.5"/><rect x="1642" y="315.5" width="56" height="4.5"/><rect x="1642" y="322" width="56" height="4"/>
 
</g>
<defs><linearGradient id="gbar" x1="0" y1="0" x2="1" y2="0"><stop offset="0" stop-color="#8a98b0"/><stop offset="1" stop-color="#3e4c66"/></linearGradient>
<linearGradient id="garr" x1="0" y1="0" x2="0" y2="1"><stop offset="0" stop-color="#78aad8"/><stop offset="1" stop-color="#2e5e88"/></linearGradient></defs>
<rect x="1714" y="290" width="4" height="36" fill="url(#gbar)"/><rect x="1774" y="290" width="4" height="36" fill="url(#gbar)"/>
<path d="M1718 300L1737 290V296H1755V290L1774 300L1755 310V304H1737V310Z" fill="url(#garr)"/>
<rect x="1722" y="314" width="48" height="4" fill="#000"/><rect x="1722" y="322" width="48" height="4" fill="#000"/>
<rect x="1807" y="294.5" width="55" height="36" fill="#ececec" stroke="#b4b4b4" stroke-width="1.5"/>
<rect x="1808" y="295.5" width="24" height="23" fill="#e0e0e0" stroke="#b4b4b4" stroke-width="1.5"/>
<path d="M1840 295V330M1851 295V330" stroke="#c8c8c8" stroke-width="1.2"/>
<g fill="#808080"><rect x="1882" y="298" width="56" height="4"/><rect x="1882" y="306" width="20" height="4"/><rect x="1918" y="306" width="20" height="4"/><rect x="1882" y="314" width="12" height="4"/><rect x="1926" y="314" width="12" height="4"/><rect x="1882" y="322" width="12" height="4"/><rect x="1926" y="322" width="12" height="4"/></g>
<path d="M1896 324L1910 304L1924 324Z" fill="#aaaaaa"/>
<path d="M2048 290l4 6-16 20-6-5z" fill="#d8b040" stroke="#8a6a20" stroke-width="1"/>
<path d="M2030 310c-8 0-16 6-18 14h24c2-4 2-8-6-14z" fill="#5a7ad0"/>
<path d="M2063 319h10l-5 5z" fill="#000"/>
<path d="M2100 300a6 6 0 0 1 12 0v8" fill="none" stroke="#8a98b0" stroke-width="2"/>
<path d="M2092 314l14-12 16 16-12 10z" fill="#eef0f6" stroke="#8a98b0" stroke-width="1.5"/>
<circle cx="2127" cy="320" r="7" fill="#40a040"/>
<path d="M2161 319h10l-5 5z" fill="#000"/>
<rect x="2190" y="305" width="32" height="2" fill="#000"/><rect x="2190" y="314" width="32" height="6" fill="#000"/>
<rect x="2224" y="302" width="108" height="40" fill="#fff"/>
<text x="2231" y="333" font-family="Liberation Sans" font-size="23" fill="#2a1a58">1.0 pt</text>
<rect x="2316" y="304" width="22" height="36" fill="#f4f5f7"/>
<path d="M2322 319h11l-5.5 5.5z" fill="#000"/>
<rect x="2387" y="302" width="21" height="40" fill="#fff"/>
<g fill="#000"><rect x="2353" y="305" width="11" height="4"/><rect x="2368" y="305" width="4" height="4"/><rect x="2376" y="305" width="11" height="4"/>
<rect x="2353" y="319" width="4" height="4"/><rect x="2361" y="319" width="4" height="4"/><rect x="2369" y="319" width="4" height="4"/><rect x="2377" y="319" width="4" height="4"/><rect x="2396" y="320" width="12" height="4"/>
<rect x="2374" y="334" width="12" height="4"/></g>
<rect x="2388" y="302" width="20" height="40" fill="#fff" opacity="0"/>
</svg>
<!-- CANVAS AREA -->
<div class="a" style="left:600px;top:368px;width:100px;height:36px;background:#fff"></div>
<div class="a" style="left:602px;top:370px;width:100px;height:34px;background:linear-gradient(#fcf0d2,#f9dc8e)"></div>
<div class="a t" style="left:611px;top:371px;font-size:24px;line-height:28px;color:#111;letter-spacing:0.2px;-webkit-text-stroke:0.6px #111">Compliance</div>
<div class="a" style="left:592px;top:402px;width:1816px;height:946px;background:#8c8c8c"></div>
<div class="a" style="left:595px;top:405px;width:1813px;height:943px;background:#6e6e6e"></div>
<div class="a" style="left:596px;top:406px;width:1812px;height:942px;background:#f3f5f8"></div>
<div class="a" style="left:596px;top:406px;width:34px;height:942px;background:linear-gradient(90deg,#fdfdfe,#e9ecf1)"></div>
<div class="a" style="left:630px;top:406px;width:1778px;height:36px;background:linear-gradient(#fcfdfe,#e9edf2)"></div>
<div class="a" style="left:596px;top:406px;width:34px;height:36px;background:linear-gradient(135deg,#ffffff 25%,#e4e8ee)"></div>
<div class="a" style="left:632px;top:442px;width:1776px;height:906px;background:linear-gradient(#d3d6db,#b0b4b8)"></div>
<div class="a" style="left:630px;top:440px;width:1778px;height:2px;background:#000"></div>
<div class="a" style="left:630px;top:440px;width:2px;height:908px;background:#000"></div>
<div class="a" style="left:1440px;top:1328px;width:594px;height:14px;background:#6e7276;filter:blur(6px);opacity:0.55"></div>
<svg style="left:0;top:0" width="2408" height="1348"><g fill="#000">
<rect x="624" y="452.2" width="6" height="2"/><rect x="598" y="470.0" width="32" height="2"/><rect x="624" y="487.8" width="6" height="2"/><rect x="617" y="505.5" width="13" height="2"/><rect x="624" y="523.2" width="6" height="2"/><rect x="610" y="541.0" width="20" height="2"/><rect x="624" y="558.8" width="6" height="2"/><rect x="617" y="576.5" width="13" height="2"/><rect x="624" y="594.2" width="6" height="2"/><rect x="603" y="612.0" width="27" height="2"/><rect x="624" y="629.8" width="6" height="2"/><rect x="617" y="647.5" width="13" height="2"/><rect x="624" y="665.2" width="6" height="2"/><rect x="610" y="683.0" width="20" height="2"/><rect x="624" y="700.8" width="6" height="2"/><rect x="617" y="718.5" width="13" height="2"/><rect x="624" y="736.2" width="6" height="2"/><rect x="598" y="754.0" width="32" height="2"/><rect x="624" y="771.8" width="6" height="2"/><rect x="617" y="789.5" width="13" height="2"/><rect x="624" y="807.2" width="6" height="2"/><rect x="610" y="825.0" width="20" height="2"/><rect x="624" y="842.8" width="6" height="2"/><rect x="617" y="860.5" width="13" height="2"/><rect x="624" y="878.2" width="6" height="2"/><rect x="603" y="896.0" width="27" height="2"/><rect x="624" y="913.8" width="6" height="2"/><rect x="617" y="931.5" width="13" height="2"/><rect x="624" y="949.2" width="6" height="2"/><rect x="610" y="967.0" width="20" height="2"/><rect x="624" y="984.8" width="6" height="2"/><rect x="617" y="1002.5" width="13" height="2"/><rect x="624" y="1020.2" width="6" height="2"/><rect x="598" y="1038.0" width="32" height="2"/><rect x="624" y="1055.8" width="6" height="2"/><rect x="617" y="1073.5" width="13" height="2"/><rect x="624" y="1091.2" width="6" height="2"/><rect x="610" y="1109.0" width="20" height="2"/><rect x="624" y="1126.8" width="6" height="2"/><rect x="617" y="1144.5" width="13" height="2"/><rect x="624" y="1162.2" width="6" height="2"/><rect x="603" y="1180.0" width="27" height="2"/><rect x="624" y="1197.8" width="6" height="2"/><rect x="617" y="1215.5" width="13" height="2"/><rect x="624" y="1233.2" width="6" height="2"/><rect x="610" y="1251.0" width="20" height="2"/><rect x="624" y="1268.8" width="6" height="2"/><rect x="617" y="1286.5" width="13" height="2"/><rect x="624" y="1304.2" width="6" height="2"/><rect x="598" y="1322.0" width="32" height="2"/><rect x="624" y="1339.8" width="6" height="2"/><rect x="637.5" y="428" width="2" height="12"/><rect x="653.5" y="434" width="2" height="6"/><rect x="671" y="420" width="2" height="20"/><rect x="2377" y="420" width="2" height="20"/><rect x="2395" y="434" width="2" height="6"/></g><text transform="translate(620,483) rotate(-90)" font-family="Liberation Sans" font-size="23" fill="#111" text-anchor="middle">0</text><text transform="translate(620,767) rotate(-90)" font-family="Liberation Sans" font-size="23" fill="#111" text-anchor="middle">1</text><text transform="translate(620,1051) rotate(-90)" font-family="Liberation Sans" font-size="23" fill="#111" text-anchor="middle">2</text><text transform="translate(620,1335) rotate(-90)" font-family="Liberation Sans" font-size="23" fill="#111" text-anchor="middle">3</text></svg>
<!-- DIALOG -->
<div class="a" style="left:686px;top:324px;width:1682px;height:1006px;border:2px solid rgba(0,0,0,0.61)"></div>
<div class="a" style="left:688px;top:326px;width:1678px;height:1002px;background:#f0f0f0;border:1px solid #fff;border-top:none"></div>
<div class="a" style="left:688px;top:326px;width:1678px;height:60px;background:#fff"></div>
<div class="a t" id="dtitle" style="left:704px;top:341px;font-size:23px;line-height:28px;color:#1a1a28;letter-spacing:-0.2px">Specify Json File</div>
<svg style="left:2326px;top:344px" width="20" height="20"><path d="M0.5 0.5L19.5 19.5M19.5 0.5L0.5 19.5" stroke="#111" stroke-width="1.5"/></svg>
<div class="a" style="left:688px;top:386px;width:1676px;height:54px;background:linear-gradient(#fbfbfb,#f3f3f3 60%,#ececec)"></div>
<div class="a" style="left:688px;top:440px;width:1676px;height:62px;background:linear-gradient(#fbfbfb,#f4f4f4 50%,#eeeeee)"></div>
<div class="a" style="left:2364px;top:386px;width:3px;height:104px;background:#d8d8d8"></div>
<svg style="left:686px;top:380px" width="130" height="110">
 <defs><radialGradient id="ggr" cx="0.4" cy="0.3" r="0.7"><stop offset="0" stop-color="#a8e080"/><stop offset="0.6" stop-color="#5cb040"/><stop offset="1" stop-color="#2e7a28"/></radialGradient>
 <radialGradient id="ggy" cx="0.4" cy="0.3" r="0.7"><stop offset="0" stop-color="#e4e4e4"/><stop offset="1" stop-color="#b4b4b4"/></radialGradient></defs>
 <circle cx="23" cy="30.7" r="15" fill="url(#ggr)"/>
 <path d="M14 31L22 23V28H31V34H22V39Z" fill="#fff"/>
 <circle cx="69" cy="30.7" r="15" fill="url(#ggy)"/>
 <path d="M78 31L70 23V28H61V34H70V39Z" fill="#e8e8e8"/>
 <path d="M102 30h10l-5 5z" fill="#111"/>
 <!-- view icon -->
 <rect x="6.5" y="68.5" width="31" height="29" fill="#eef1f8" stroke="#2e3e60" stroke-width="1.4"/>
 <rect x="6.5" y="68.5" width="31" height="5" fill="#5078d8"/>
 <g fill="#50607e"><rect x="10" y="77" width="10" height="8"/><rect x="22" y="77" width="10" height="8"/><rect x="10" y="87" width="10" height="8"/><rect x="22" y="87" width="10" height="8"/></g>
 <g fill="#f09040"><rect x="12" y="79" width="5" height="2"/><rect x="24" y="79" width="5" height="2"/><rect x="12" y="89" width="5" height="2"/><rect x="24" y="89" width="5" height="2"/></g>
 <path d="M106 82h11l-5.5 5.5z" fill="#111"/>
</svg>
<div class="a t" style="left:815px;top:397px;font-size:24px;line-height:28px;color:#1a1a28;letter-spacing:0.4px">Location:</div>
<div class="a" style="left:816px;top:422px;width:12px;height:2px;background:#111"></div>
<div class="a t" style="left:729px;top:449px;font-size:24px;line-height:28px;color:#1a1a28">View</div>
<div class="a" style="left:730px;top:475px;width:14px;height:2px;background:#111"></div>
<!-- location combo -->
<div class="a" style="left:922px;top:388px;width:1200px;height:48px;background:#fff;border:2px solid #dadada"></div>
<div class="a" style="left:969px;top:398px;width:1113px;height:32px;background:#efefef"></div>
<svg style="left:928px;top:396px" width="32" height="32"><rect width="32" height="32" fill="#2f6ea8"/><rect x="5" y="5" width="22" height="20" fill="none" stroke="#9a8a50" stroke-width="2"/><rect x="7" y="8" width="14" height="16" fill="#f0a030"/><rect x="11" y="12" width="17" height="16" fill="#fff" stroke="#8ab0d8" stroke-width="2"/></svg>
<div class="a t" style="left:970px;top:399px;font-size:24px;line-height:28px;color:#6a6676;letter-spacing:-0.05px">Librarian (librarian://Main/Flourish Template Data Sources)</div>
<svg style="left:2094px;top:405px" width="20" height="14"><path d="M1 2L10 11L19 2" fill="none" stroke="#a8a8a8" stroke-width="2"/></svg>
<svg style="left:2128px;top:396px" width="80" height="32">
 <path d="M10.6 8.2A9.5 9.5 0 1 0 20.75 7.8" fill="none" stroke="#3a68d0" stroke-width="5"/>
 <path d="M16 4H28.5V16Z" fill="#3a68d0"/><rect x="16" y="4" width="2.5" height="11" fill="#3a68d0"/>
 <defs><linearGradient id="gupf" x1="0" y1="0" x2="1" y2="1"><stop offset="0" stop-color="#fdf2b0"/><stop offset="0.6" stop-color="#f2cc70"/><stop offset="1" stop-color="#d89a38"/></linearGradient></defs>
 <path d="M46.5 28V6.5H56L57 8.5H80V28Z" fill="url(#gupf)" stroke="#8a7e68" stroke-width="1.5"/>
 <path d="M47 12.5H80" stroke="#9a8e78" stroke-width="1.5"/>
 <path d="M80 13V28H47" fill="none" stroke="#1a1208" stroke-width="1.8"/>
 <path d="M58 23c6 0 10-4 10-12h-5l7.5-9 7.5 9h-5c0 9-5 14-15 14z" fill="#3aa838" stroke="#1e6a1e" stroke-width="0.8"/>
</svg>
<!-- panes -->
<div class="a" style="left:700px;top:502px;width:281px;height:686px;background:#f7f7f7;border-top:2px solid #6f6f6f;border-left:2px solid #6f6f6f;border-right:2px solid #6f6f6f;border-bottom:2px solid #6f6f6f"></div>
<div class="a" style="left:988px;top:502px;width:1365px;height:686px;background:#fff;border-top:3px solid #6f6f6f;border-left:2px solid #6f6f6f;border-right:2px solid #e3e3e3;border-bottom:2px solid #e3e3e3"></div>
<!-- cloud librarian -->
<svg style="left:807px;top:515px" width="64" height="64">
 <rect x="1" y="1" width="62" height="62" rx="3" fill="#4f8fbd"/>
 <path d="M28 1H62V38Z" fill="#e6a848"/>
 <path d="M28 1L62 38V40H50L28 24Z" fill="#fff"/>
 <path d="M4 55V48Q4 42 12 42H15V33Q15 25 28 25Q40 25 43 33H49Q52 33 52 40V43Q59 43 59 50V55Z" fill="#fff" stroke="#3a78b0" stroke-width="1.4"/>
 <path d="M28 24.5L28 2" stroke="#fff" stroke-width="1.5"/>
</svg>
<div class="a t" style="left:764px;top:586px;font-size:23px;line-height:28px;color:#1a1a28;letter-spacing:-0.2px">Cloud Librarian</div>
<!-- files -->
<svg style="left:1047px;top:513px" width="46" height="58"><path d="M1.5 1.5H31.5L42.5 12V56H1.5Z" fill="#8ab6e4" stroke="#4e7eb4" stroke-width="2"/><path d="M31 1.5V12H42.5" fill="#9cc0e8" stroke="#4e7eb4" stroke-width="1.6"/></svg>
<svg style="left:1197px;top:513px" width="46" height="58"><path d="M1.5 1.5H31.5L42.5 12V56H1.5Z" fill="#f4f5f7" stroke="#8a8a8a" stroke-width="2"/><path d="M31 1.5V12H42.5" fill="#e8e8e8" stroke="#8a8a8a" stroke-width="1.6"/></svg>
<div class="a" style="left:996px;top:580px;width:148px;height:56px;background:#3574d4"></div>
<div class="a t" style="left:996px;top:580px;width:148px;text-align:center;font-size:22px;line-height:27px;color:#fff;letter-spacing:-0.5px">package_label<br>.json</div>
<div class="a t" style="left:1152px;top:580px;font-size:22px;line-height:27px;color:#1a1a28;letter-spacing:-0.5px">plant_label.j...</div>
<!-- bottom -->
<div class="a t" style="left:705px;top:1222px;font-size:23px;line-height:28px;color:#1a1a28;letter-spacing:-1.1px">File Name:</div>
<div class="a" style="left:745px;top:1246px;width:15px;height:2px;background:#111"></div>
<div class="a t" style="left:705px;top:1280px;font-size:23px;line-height:28px;color:#1a1a28;letter-spacing:-1.1px">File Type:</div>
<div class="a" style="left:745px;top:1305px;width:15px;height:2px;background:#111"></div>
<div class="a" style="left:826px;top:1214px;width:1366px;height:42px;background:#fff;border:2px solid #6f6f6f"></div>
<div class="a t" style="left:831px;top:1221px;font-size:23px;line-height:28px;color:#1a1a28;letter-spacing:-0.7px">package_label.json</div>
<svg style="left:2164px;top:1228px" width="20" height="14"><path d="M1.5 2.5L9.5 10.5L17.5 2.5" fill="none" stroke="#444" stroke-width="1.7"/></svg>
<div class="a" style="left:826px;top:1272px;width:1366px;height:42px;background:#e1e1e1;border:2px solid #adadad"></div>
<div class="a t" style="left:834px;top:1280px;font-size:23px;line-height:28px;color:#1a1a28;letter-spacing:-1.2px">JSON Files (*.json)</div>
<svg style="left:2164px;top:1286px" width="20" height="14"><path d="M1.5 2.5L9.5 10.5L17.5 2.5" fill="none" stroke="#444" stroke-width="1.7"/></svg>
<div class="a" style="left:2206px;top:1214px;width:146px;height:42px;background:#e1e1e1;border:3px solid #2f6fd2"></div>
<div class="a t" style="left:2206px;top:1221px;width:146px;text-align:center;font-size:23px;line-height:28px;color:#1a1a28;letter-spacing:-0.6px">Open</div>
<div class="a" style="left:2206px;top:1272px;width:146px;height:42px;background:#e1e1e1;border:2px solid #adadad"></div>
<div class="a t" style="left:2206px;top:1280px;width:146px;text-align:center;font-size:23px;line-height:28px;color:#1a1a28;letter-spacing:-0.6px">Cancel</div>
<svg style="left:2346px;top:1308px" width="16" height="16"><g fill="#bcbcbc"><rect x="12" y="0" width="4" height="4"/><rect x="6" y="6" width="4" height="4"/><rect x="12" y="6" width="4" height="4"/><rect x="0" y="12" width="4" height="4"/><rect x="6" y="12" width="4" height="4"/><rect x="12" y="12" width="4" height="4"/></g></svg>
<!-- back/print/add icons -->
<svg style="left:0;top:0" width="700" height="190">
 <defs><linearGradient id="gsky" x1="0" y1="0" x2="0" y2="1"><stop offset="0" stop-color="#8eb0e8"/><stop offset="0.45" stop-color="#d8e4f4"/><stop offset="0.48" stop-color="#e8d8a8"/><stop offset="1" stop-color="#c8b078"/></linearGradient></defs>
 <circle cx="114" cy="152.8" r="20.5" fill="none" stroke="#111" stroke-width="2.6"/>
 <path d="M123 153.5H106M111.5 147.5L105.5 153.5L111.5 159.5" fill="none" stroke="#111" stroke-width="2.6"/>
 <g fill="none" stroke="#222" stroke-width="3.6">
  <path d="M264.5 143V132.8H288.5V143"/>
  <path d="M263 163.5H259a2 2 0 0 1-2-2V147a4 4 0 0 1 4-4H292a4 4 0 0 1 4 4V161.5a2 2 0 0 1-2 2H290"/>
  <path d="M264.5 155.5H288.5V172.5H264.5Z"/>
 </g>
 <circle cx="264" cy="150" r="2" fill="#222"/>
 <path d="M269 161.5h15M269 167h15" stroke="#222" stroke-width="2.2"/>
 <rect x="413" y="131" width="44" height="44" fill="url(#gsky)"/>
 <path d="M413 175h10l6-3h-16z" fill="#8a7a40"/>
 <path d="M424 168V143a2.5 2.5 0 0 1 5 0V168zM420 157v-8a2 2 0 0 1 4 0v6h2v4h-4a2 2 0 0 1-2-2zM429 156h3v-6a2 2 0 0 1 4 0v8a2 2 0 0 1-2 2h-5z" fill="#5cae48" stroke="#3a7a30" stroke-width="0.8"/>
 <circle cx="448" cy="140" r="3.8" fill="#f8d8b8" stroke="#e06030" stroke-width="2"/>
 <path d="M438 170l6-5l5 5z" fill="#e8e8f0" stroke="#9090a0" stroke-width="0.8"/>
</svg>
<!-- sidebar icons -->
<svg style="left:0;top:110px" width="84" height="1238">
 <g fill="#cdd0d3">
  <path d="M9.5 65.5 L32 50 L54.5 65.5" fill="none" stroke="#cdd0d3" stroke-width="4.5" stroke-linejoin="miter" stroke-linecap="round"/>
  <path d="M9 72 L32 58 L55 72 V95 H37 V81 H27 V95 H9Z"/>
  <path d="M15 152h31v12h-4v-8h-23v8h-4z"/>
  <path d="M12 163h38a4 4 0 0 1 4 4v17a3 3 0 0 1-3 3h-5v-9h-30v9h-5a3 3 0 0 1-3-3v-17a4 4 0 0 1 4-4z"/>
  <circle cx="18" cy="173" r="2.2" fill="#1a2a37"/>
  <path d="M15 178h31v22h-31z"/>
  <path d="M19 181h23v16h-23z" fill="#1a2a37"/>
  <path d="M23 185h15v3h-15zM23 191h15v3h-15z"/>
  <circle cx="30.5" cy="278.5" r="22.5" fill="#fff"/>
  <circle cx="13" cy="298" r="8" fill="#1a2a37"/>
  <circle cx="20" cy="271.5" r="3.2" fill="#1a2a37"/><circle cx="29.5" cy="266" r="3.2" fill="#1a2a37"/><circle cx="16.5" cy="280" r="3.2" fill="#1a2a37"/><circle cx="39" cy="267.5" r="3" fill="#1a2a37"/>
  <path d="M60 255L16 299" stroke="#1a2a37" stroke-width="9.5"/>
  <path d="M54.5 259.5L22 292" stroke="#fff" stroke-width="4.2" stroke-linecap="round"/>
  <path d="M19 290.5l5 5-3 3-5-5z" fill="#fff"/>
  <path d="M16.5 294c-6 1-7 5-6 9 0 1 0 2-1 3 5 0 11-3 11-8z" fill="#fff"/>
  <path d="M9 373v-2a3 3 0 0 1 3-3h11l5 5h20a3 3 0 0 1 3 3v3h-36a3 3 0 0 0-3 2.5l-3 19z"/>
  <path d="M15 381a3 3 0 0 1 3-2.5h35.5a2 2 0 0 1 2 2.3l-2.8 21.2a3 3 0 0 1-3 2.5h-34.5a2 2 0 0 1-2-2.3z"/>
  <path fill-rule="evenodd" d="M28.5 464h7l1 6.5l4.5 2.3l5.5-4l5 5l-4 5.5l2 4.6l6.5 1v7l-6.5 1l-2 4.6l4 5.5l-5 5l-5.5-4l-4.5 2.3l-1 6.5h-7l-1-6.5l-4.5-2.3l-5.5 4l-5-5l4-5.5l-2-4.6l-6.5-1v-7l6.5-1l2-4.6l-4-5.5l5-5l5.5 4l4.5-2.3z M32 479a9 9 0 1 0 0.01 0z"/>
  <circle cx="32" cy="1214" r="21.5" fill="none" stroke="#cdd0d3" stroke-width="3.5"/>
  <path d="M25 1205.5a7 7 0 1 1 10 6.3c-2 1-3 2.5-3 4.5v2" fill="none" stroke="#cdd0d3" stroke-width="4"/>
  <circle cx="32" cy="1226" r="2.6"/>
 </g>
</svg>
<div class="a t" style="left:144px;top:132px;font-size:33px;color:#3a3c42;line-height:38px">Back</div>
<div class="a t" style="left:305px;top:132px;font-size:33px;color:#3a3c42;line-height:38px">Print</div>
<div class="a t" style="left:467px;top:132px;font-size:33px;color:#3a3c42;line-height:38px;letter-spacing:-0.5px">Add Image</div>
</body></html>
